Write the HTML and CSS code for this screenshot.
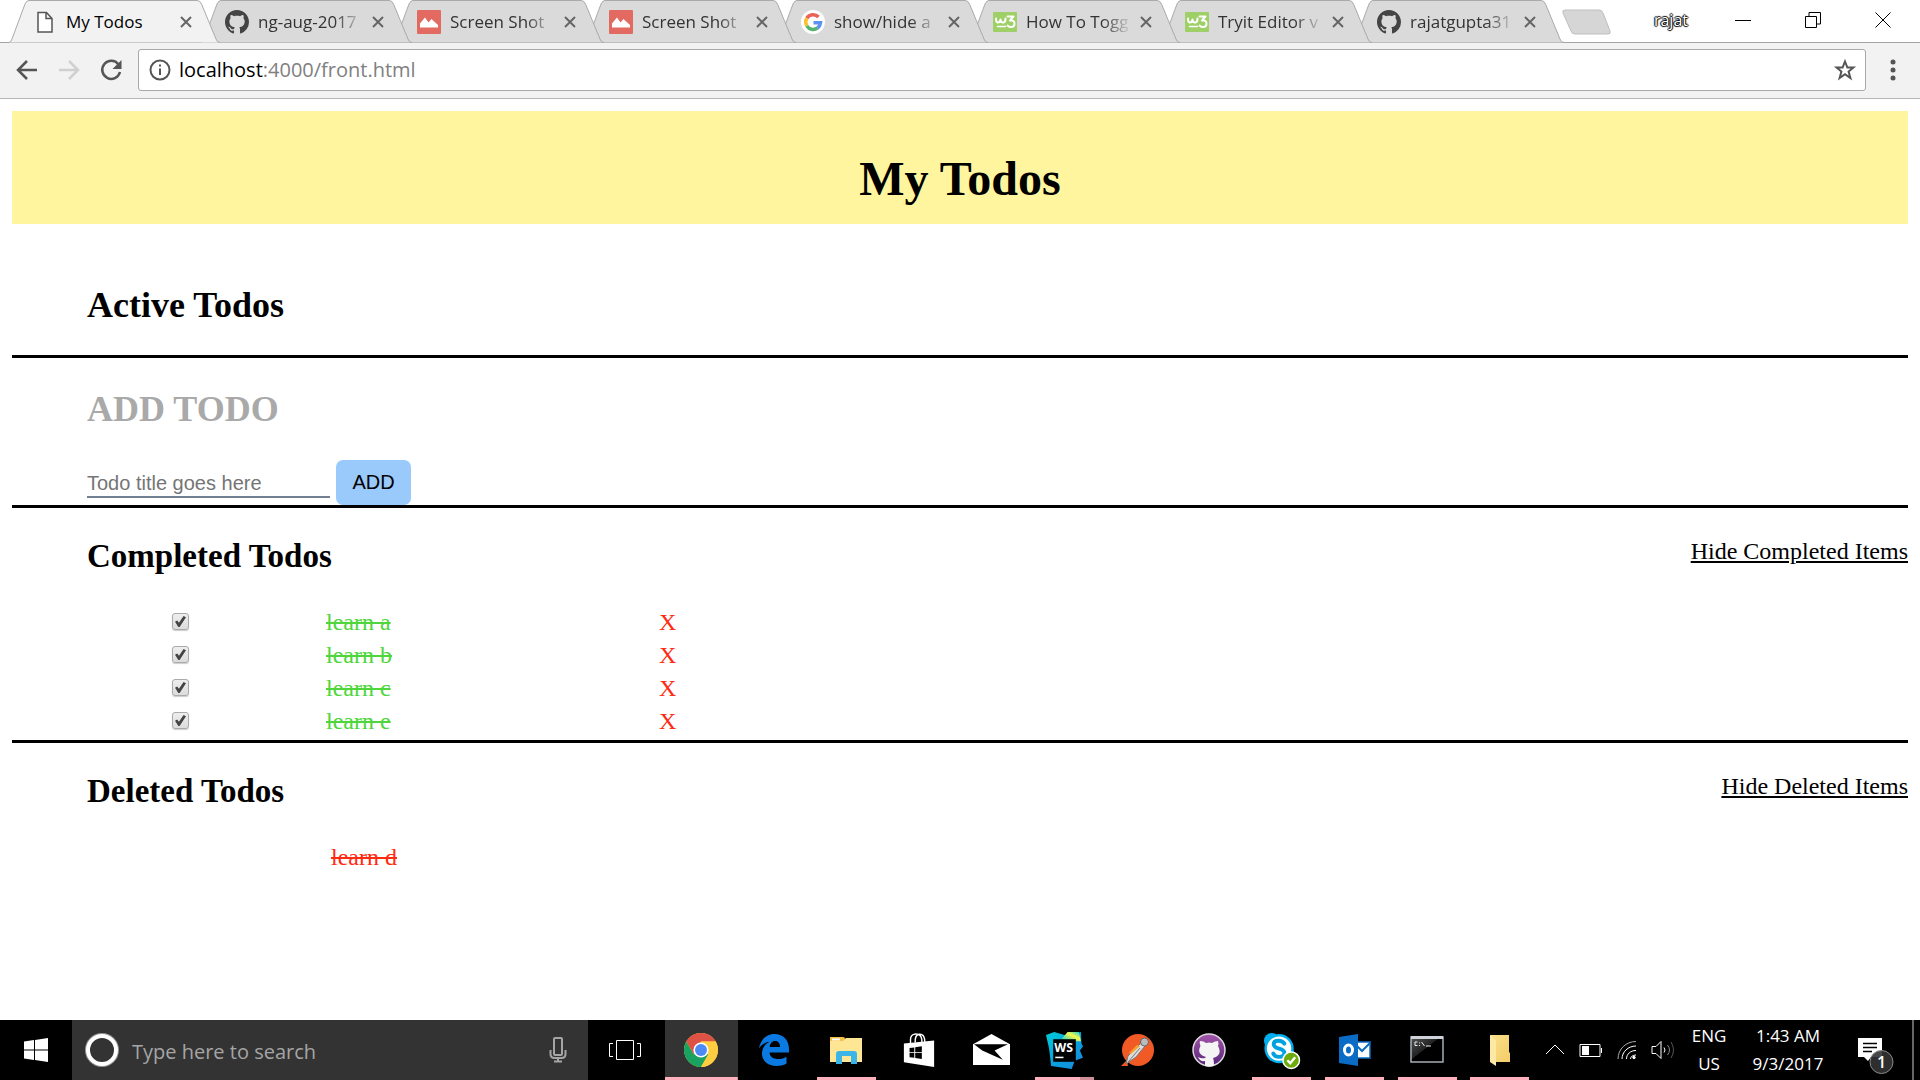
FILE: index.html
```html
<!DOCTYPE html>
<html lang="en">
<head>
<meta charset="utf-8">
<title>My Todos</title>
<link rel="stylesheet" href="styles.css">
</head>
<body>
<svg class="defs" aria-hidden="true">
  <defs>
    <linearGradient id="cubeFill" x1="0" y1="0" x2="1" y2="1"><stop offset="0" stop-color="#00cdd7"/><stop offset=".55" stop-color="#07a0e0"/><stop offset="1" stop-color="#2086d7"/></linearGradient>
    <linearGradient id="cubeTop" x1="0" y1="1" x2="1" y2="0"><stop offset="0" stop-color="#00cdd7"/><stop offset=".6" stop-color="#fcf84a"/><stop offset="1" stop-color="#00cdd7"/></linearGradient>
    <linearGradient id="catFill" x1="0" y1="0" x2="0" y2="1"><stop offset="0" stop-color="#a455ab"/><stop offset="1" stop-color="#57247a"/></linearGradient>
    <linearGradient id="consoleFill" x1="0" y1="0" x2="1" y2="1"><stop offset="0" stop-color="#555"/><stop offset=".45" stop-color="#222"/><stop offset=".46" stop-color="#000"/></linearGradient>
    <linearGradient id="folderFill" x1="0" y1="0" x2="1" y2="1"><stop offset="0" stop-color="#fbe08a"/><stop offset="1" stop-color="#f3cd68"/></linearGradient>
    <symbol id="tab-shape" viewBox="0 0 211 43"><path d="M0 42.500 Q2 42 3 39 L16 4 Q17.500 .5 20 .5 H188 Q191 .5 192.500 4 L207 39 Q208 42.500 211 42.500"/></symbol>
    <symbol id="octocat" viewBox="0 0 16 16"><path d="M8 0C3.580 0 0 3.580 0 8c0 3.540 2.290 6.530 5.470 7.590.4.070.55-.17.55-.38 0-.19-.01-.82-.01-1.490-2.010.37-2.530-.49-2.690-.94-.09-.23-.48-.94-.82-1.130-.28-.15-.68-.52-.01-.53.63-.01 1.080.58 1.230.82.72 1.210 1.870.87 2.330.66.07-.52.28-.87.51-1.070-1.780-.2-3.640-.89-3.640-3.950 0-.87.31-1.590.82-2.150-.08-.2-.36-1.020.08-2.120 0 0 .67-.21 2.200.82.64-.18 1.320-.27 2-.27s1.360.09 2 .27c1.530-1.040 2.200-.82 2.200-.82.44 1.100.16 1.920.08 2.120.51.56.82 1.270.82 2.150 0 3.070-1.870 3.750-3.650 3.950.29.25.54.73.54 1.480 0 1.070-.01 1.930-.01 2.200 0 .21.15.46.55.38A8.010 8.010 0 0 0 16 8c0-4.420-3.580-8-8-8z"/></symbol>
    <symbol id="picture" viewBox="0 0 24 24"><path fill="#e36a60" d="M1 0h22q1 0 1 1v22q0 1-1 1H1q-1 0-1-1V1q0-1 1-1z"/><path fill="#fff" d="M3 17v-3.500L8 7.500l3.500 5L14.500 9 21 15v2.500H3z"/></symbol>
    <symbol id="w3" viewBox="0 0 24 24"><rect y="2" width="24" height="20" rx="1" fill="#9fcf67"/><g fill="none" stroke="#fff" stroke-width="2" stroke-linecap="round" stroke-linejoin="round"><path d="M3 8.500q0 4 2 4t2.500-3q0 3 2.500 3T12.500 8.500"/><path d="M14.500 6.500h6l-3.500 4q4.500-.5 4.500 3T18 17q-2.500 0-3.500-1.500"/><path stroke-width="1.500" d="M4.500 16.500h8"/></g></symbol>
    <symbol id="cross" viewBox="0 0 12 12"><path d="M1 1l10 10M11 1L1 11"/></symbol>
  </defs>
</svg>

<header class="browser">
  <div class="tabstrip">
    <nav class="tabs" aria-label="Tabs">
      <div class="tab active"><svg class="shape"><use href="#tab-shape"/></svg><div class="tab-body">
        <svg class="favicon" viewBox="0 0 24 24"><path fill="#fff" stroke="#555" stroke-width="1.500" d="M5 2.500h8.500l5.500 6V22H5zM13 2.500v6h6"/></svg>
        <a class="tab-title" href="#my-todos">My Todos</a><button class="tab-close" aria-label="Close tab"><svg><use href="#cross"/></svg></button></div></div>
      <div class="tab"><svg class="shape"><use href="#tab-shape"/></svg><div class="tab-body">
        <svg class="favicon" fill="#444"><use href="#octocat"/></svg>
        <a class="tab-title" href="#">ng-aug-2017</a><button class="tab-close" aria-label="Close tab"><svg><use href="#cross"/></svg></button></div></div>
      <div class="tab"><svg class="shape"><use href="#tab-shape"/></svg><div class="tab-body">
        <svg class="favicon"><use href="#picture"/></svg>
        <a class="tab-title" href="#">Screen Shot</a><button class="tab-close" aria-label="Close tab"><svg><use href="#cross"/></svg></button></div></div>
      <div class="tab"><svg class="shape"><use href="#tab-shape"/></svg><div class="tab-body">
        <svg class="favicon"><use href="#picture"/></svg>
        <a class="tab-title" href="#">Screen Shot</a><button class="tab-close" aria-label="Close tab"><svg><use href="#cross"/></svg></button></div></div>
      <div class="tab"><svg class="shape"><use href="#tab-shape"/></svg><div class="tab-body">
        <svg class="favicon" viewBox="0 0 24 24"><circle cx="12" cy="12" r="12" fill="#fff"/><g fill="none" stroke-width="3.500"><path stroke="#ea6258" d="M5.800 8.200A7.500 7.500 0 0 1 17.500 7"/><path stroke="#fbc02d" d="M5.800 8.200a7.500 7.500 0 0 0 0 7.600"/><path stroke="#55b36d" d="M5.800 15.800a7.500 7.500 0 0 0 10.700 2.200"/><path stroke="#5c93f2" d="M16.500 18a7.500 7.500 0 0 0 3-5.200H12.500"/></g></svg>
        <a class="tab-title" href="#">show/hide a</a><button class="tab-close" aria-label="Close tab"><svg><use href="#cross"/></svg></button></div></div>
      <div class="tab"><svg class="shape"><use href="#tab-shape"/></svg><div class="tab-body">
        <svg class="favicon"><use href="#w3"/></svg>
        <a class="tab-title" href="#">How To Togg</a><button class="tab-close" aria-label="Close tab"><svg><use href="#cross"/></svg></button></div></div>
      <div class="tab"><svg class="shape"><use href="#tab-shape"/></svg><div class="tab-body">
        <svg class="favicon"><use href="#w3"/></svg>
        <a class="tab-title" href="#">Tryit Editor v</a><button class="tab-close" aria-label="Close tab"><svg><use href="#cross"/></svg></button></div></div>
      <div class="tab"><svg class="shape"><use href="#tab-shape"/></svg><div class="tab-body">
        <svg class="favicon" fill="#444"><use href="#octocat"/></svg>
        <a class="tab-title" href="#">rajatgupta31</a><button class="tab-close" aria-label="Close tab"><svg><use href="#cross"/></svg></button></div></div>
    </nav>
    <button class="new-tab" aria-label="New tab"><svg viewBox="0 0 52 26"><path fill="#d6d6d6" stroke="#bebebe" d="M4 1h34q3 0 4 3l7 18q1 3-2 3H14q-3 0-4-3L2 4q-1-3 2-3z"/></svg></button>
    <div class="window-controls">
      <span class="profile">rajat</span>
      <button aria-label="Minimize"><svg viewBox="0 0 16 16"><path d="M0 8.500h16"/></svg></button>
      <button aria-label="Restore"><svg viewBox="0 0 16 16"><path d="M.5 4.500h11v11H.5zM4 4V.5h11.500V12H12"/></svg></button>
      <button aria-label="Close"><svg viewBox="0 0 16 16"><path d="M.5.5l15 15M15.500.5l-15 15"/></svg></button>
    </div>
  </div>
  <div class="toolbar">
    <button class="tool" aria-label="Back"><svg viewBox="0 0 24 24" stroke="#555"><path d="M22 12H3M12 3l-9 9 9 9"/></svg></button>
    <button class="tool" aria-label="Forward"><svg viewBox="0 0 24 24" stroke="#d0d0d0"><path d="M2 12h19M12 3l9 9-9 9"/></svg></button>
    <button class="tool" aria-label="Reload"><svg viewBox="0 0 24 24" stroke="#555"><path d="M19.500 6.500A9 9 0 1 0 21 14"/><path fill="#555" stroke="none" d="M22.500 2v9h-9z"/></svg></button>
    <div class="omnibox">
      <svg class="info" viewBox="0 0 22 22"><circle cx="11" cy="11" r="9.500"/><path d="M11 9.500V16M11 5.500v2"/></svg>
      <a class="url" href="#my-todos"><span class="host">localhost</span>:4000/front.html</a>
      <button class="star" aria-label="Bookmark"><svg viewBox="0 0 22 22"><path d="M11 2.500l2.400 6h6l-4.800 4 1.800 6.500-5.400-3.800L5.600 19l1.800-6.500-4.800-4h6z"/></svg></button>
    </div>
    <button class="menu" aria-label="Menu"><svg viewBox="0 0 6 24"><circle cx="3" cy="4" r="2.500"/><circle cx="3" cy="12" r="2.500"/><circle cx="3" cy="20" r="2.500"/></svg></button>
  </div>
</header>

<main class="page" id="my-todos">
  <div class="banner"><h1>My Todos</h1></div>
  <section class="active-todos"><h2>Active Todos</h2></section>
  <section class="add-todo">
    <h2>ADD TODO</h2>
    <form class="add-form">
      <input type="text" aria-label="Todo title" placeholder="Todo title goes here">
      <button type="button">ADD</button>
    </form>
  </section>
  <section class="completed">
    <div class="section-head"><h3>Completed Todos</h3><a href="#completed">Hide Completed Items</a></div>
    <ul class="todos" id="completed">
      <li><input type="checkbox" id="t1" checked><label for="t1">learn a</label><button aria-label="Delete learn a">X</button></li>
      <li><input type="checkbox" id="t2" checked><label for="t2">learn b</label><button aria-label="Delete learn b">X</button></li>
      <li><input type="checkbox" id="t3" checked><label for="t3">learn c</label><button aria-label="Delete learn c">X</button></li>
      <li><input type="checkbox" id="t4" checked><label for="t4">learn e</label><button aria-label="Delete learn e">X</button></li>
    </ul>
  </section>
  <section class="deleted">
    <div class="section-head"><h3>Deleted Todos</h3><a href="#deleted">Hide Deleted Items</a></div>
    <ul class="todos removed" id="deleted"><li><del>learn d</del></li></ul>
  </section>
</main>

<footer class="taskbar">
  <button class="start" aria-label="Start"><svg viewBox="0 0 24 24"><path fill="#fff" d="M0 3.500L10 2v9.500H0zM11 1.900L24 0v11.500H11zM0 12.500h10V22L0 20.500zM11 12.500h13V24l-13-1.900z"/></svg></button>
  <div class="search">
    <svg class="cortana" viewBox="0 0 34 34"><circle cx="17" cy="17" r="15.500" fill="none" stroke="#999" stroke-width="3"/><circle cx="17" cy="17" r="14" fill="none" stroke="#fff" stroke-width="4"/></svg>
    <input type="text" aria-label="Search" placeholder="Type here to search">
    <svg class="mic" viewBox="0 0 18 26"><path d="M6 1h6q1 0 1 1v15q0 1-1 1H6q-1 0-1-1V2q0-1 1-1zM1.500 13v4q0 4 4 4h7q4 0 4-4v-4M9 21v3M5 24.500h8"/></svg>
  </div>
  <button class="task-view" aria-label="Task view"><svg viewBox="0 0 32 22"><path d="M7.500 1.500h17v19h-17zM4 4.500H.5v13H4M28 4.500h3.500v13H28"/></svg></button>
  <nav class="apps" aria-label="Apps">
    <button class="app open current" aria-label="Chrome"><svg viewBox="0 0 34 34"><circle cx="17" cy="17" r="17" fill="#ffcd40"/><path fill="#de5145" d="M2.300 8.500A17 17 0 0 1 31.700 8.500H17L9.600 21.200z"/><path fill="#1aa260" d="M2.300 8.500A17 17 0 0 0 17 34l7.400-12.700-14.800 0z"/><path fill="#ffcd40" d="M17 34A17 17 0 0 0 31.700 8.500H17l7.400 12.800z"/><circle cx="17" cy="17" r="7.600" fill="#fff"/><circle cx="17" cy="17" r="6" fill="#4c8bf5"/></svg></button>
    <button class="app" aria-label="Edge"><svg viewBox="0 0 34 34"><path fill="#0a7ae2" d="M2 15.500C3.500 6.500 9.500 1 17.500 1 26.500 1 32 7.500 32 16v3.500H12.500c.3 4.500 4 6.500 8.500 6.500 3.500 0 6-.8 8.500-2.300V30.500C26.500 32.300 23 33 19.500 33 11 33 5 28 5 20.500c0-5 3-9.500 7.500-11.700C8.500 9 4.500 11.500 2 15.500zM12.700 14H23c0-3.500-1.500-6-5-6-3 0-5 2.500-5.300 6z"/></svg></button>
    <button class="app open" aria-label="File Explorer"><svg viewBox="0 0 34 34"><path fill="#f5c243" d="M1 4h13q2 0 2 2v3H1z"/><path fill="#ffe694" d="M1 8h13l3-3h16v24H1z"/><path fill="#fff" d="M3 5.500h8v2H3z"/><path fill="#3bb4e7" d="M7 31V21q0-3 3-3h15q3 0 3 3v10h-6v-8H13v8z"/></svg></button>
    <button class="app" aria-label="Store"><svg viewBox="0 0 34 36"><path fill="none" stroke="#fff" stroke-width="1.500" d="M8 11V7c0-8 11-8 12 0v4M13 10V7c1-8 9-7 10 0v3"/><path fill="#fff" d="M1 11L33 8v28L1 31z"/><path fill="#000" d="M7 16l5-.7v5H7zM13 15.100l7-1v6.200h-7zM7 21.300h5v5L7 25.600zM13 21.300h7v6.300l-7-1z"/></svg></button>
    <button class="app" aria-label="Mail"><svg class="wide" viewBox="0 0 36 34"><path fill="#fff" d="M0 11L18 1l18 10v20H0z"/><path fill="#000" d="M1 11h33l-13 6 8 9L9 17z"/></svg></button>
    <button class="app open grouped" aria-label="WebStorm"><svg class="wide" viewBox="0 0 36 36"><path fill="url(#cubeFill)" d="M0 3l8-3 10 3 16-3 .5 11 1.500 3-3 4 3 7-8 3-3 8-20-3-2-17z"/><path fill="url(#cubeTop)" d="M15 7l6-7 11 0 2 9-7 0z"/><path d="M7 7h22v22H7z"/><text x="8" y="19" fill="#fff" font-family="Open Sans, sans-serif" font-weight="700" font-size="12">WS</text><path fill="#fff" d="M9 24h8v1.500H9z"/></svg></button>
    <button class="app" aria-label="Postman"><svg viewBox="0 0 34 34"><circle cx="18" cy="17" r="16" fill="#f15a24"/><path fill="#f15a24" d="M7 27l-6 6h7z"/><path fill="#ddd" stroke="#777" d="M6 31l2-8 13-13 4 3-9 11z"/><path fill="#f7a12d" d="M9 20l8-8 3 1-9 8z"/><circle cx="24.500" cy="9" r="4" fill="#bbb" stroke="#666"/><path stroke="#777" d="M8 29l12-14"/></svg></button>
    <button class="app" aria-label="GitHub"><svg viewBox="0 0 34 34"><circle cx="17" cy="17" r="16" fill="url(#catFill)" stroke="#ddd" stroke-width="1.500"/><path fill="#f4f4f4" d="M8 8q4 0 6 2 3-.8 6 0 3-2 6-2 1 3 0 5 5 9-5 12 1 2 1 8-5 1.500-9 0v-5q-5 1-7-4 4 2 7 1l1-1Q4 21 8.500 13 7 10 8 8z"/></svg></button>
    <button class="app open" aria-label="Skype"><svg class="wide" viewBox="0 0 38 38"><circle cx="9" cy="9" r="8" fill="#00aff0"/><circle cx="24" cy="24" r="9" fill="#00aff0"/><circle cx="16.500" cy="17" r="15" fill="#00aff0"/><circle cx="16.500" cy="17" r="12.500" fill="#fff"/><path fill="none" stroke="#00a2e0" stroke-width="4" stroke-linecap="round" d="M22 12q-2-3-6-3-5 0-5 3.500 0 3 5.500 4.500t5.500 4.500q0 4-5.500 4-4.500 0-6-3.500"/><circle cx="29" cy="29" r="8.500" fill="#6bab0b" stroke="#fff" stroke-width="1.500"/><path fill="none" stroke="#fff" stroke-width="2.500" d="M25 29l3 3 5-6"/></svg></button>
    <button class="app open" aria-label="Outlook"><svg viewBox="0 0 34 34"><path fill="#fff" stroke="#0a6cc4" stroke-width="1.500" d="M17 9h15v16H17z"/><path fill="none" stroke="#0a6cc4" stroke-width="2" d="M18 12l6 6 8-8"/><path fill="#0a6cc4" d="M1 4l19-3v32L1 30z"/><ellipse cx="10.500" cy="17" rx="4" ry="5" fill="none" stroke="#fff" stroke-width="3"/></svg></button>
    <button class="app open" aria-label="Command Prompt"><svg viewBox="0 0 34 34"><path fill="url(#consoleFill)" stroke="#a5adb5" stroke-width="1.500" d="M1 4h32v25H1z"/><path fill="#cdd3d9" d="M1 3h32v3H1z"/><path fill="none" stroke="#eee" d="M7.500 9H5v3.500h2.500M9.500 9.500v1M9.500 12v1M11.500 9l3 4M16 13h5"/></svg></button>
    <button class="app open" aria-label="Folder"><svg viewBox="0 0 34 34"><path fill="url(#folderFill)" d="M7 2h19v17l1 1v9H12z"/><path fill="#fde9a6" d="M7 2l6 5v26l-6-4z"/></svg></button>
  </nav>
  <div class="tray">
    <svg class="t-chevron" viewBox="0 0 20 20"><path d="M1 14l9-9 9 9"/></svg>
    <svg class="t-battery" viewBox="0 0 24 20"><path d="M1 4.500h20v12H1zM22.500 8v5"/><path fill="#fff" stroke="none" d="M3 6h7v9H3z"/></svg>
    <svg class="t-wifi" viewBox="0 0 20 20"><path stroke="#aaa" d="M1 19C1 9 9 1.500 19 1.500"/><path d="M5 19C5 12 11 6 19 6M9.500 19c0-5 4-8.500 9.500-8.500M13.500 19c0-2.500 2.500-4 5.500-4"/><circle cx="17" cy="17.500" r="1.200" fill="#fff"/></svg>
    <svg class="t-volume" viewBox="0 0 24 20"><path d="M1 6.500h4l5-5v17l-5-5H1z"/><path d="M13 7.500q2 2.500 0 5"/><path stroke="#888" d="M16.500 5q4 5 0 10"/><path stroke="#555" d="M20 2q5 8 0 16"/></svg>
    <div class="lang">ENG<br>US</div>
    <div class="clock">1:43 AM<br>9/3/2017</div>
    <button class="action" aria-label="Notifications"><svg viewBox="0 0 36 38"><path fill="#fff" d="M1 1h24v19H14l-3 4-4-4H1z"/><path stroke="#000" stroke-width="1.500" d="M6 6.500h14M6 10.500h14M6 14.500h9"/><circle cx="24.500" cy="25" r="11.500" fill="#333" fill-opacity=".9" stroke="#888"/><text x="24.500" y="31" text-anchor="middle" fill="#fff" font-family="Open Sans, sans-serif" font-size="16" font-weight="600">1</text></svg></button>
  </div>
</footer>
</body>
</html>
```
FILE: styles.css
```css
* { box-sizing: border-box; }
html, body { height: 100%; }
body {
  margin: 0;
  display: flex;
  flex-direction: column;
  background: #fff;
  color: #000;
  font-family: "Liberation Serif", serif;
  font-size: 24px;
}
button { border: 0; padding: 0; background: none; font: inherit; color: inherit; }
svg { display: block; flex: none; overflow: visible; }
.defs { position: absolute; width: 0; height: 0; }

/* Browser frame */
.browser { font-family: "Open Sans", sans-serif; flex: none; }
.tabstrip {
  display: flex;
  height: 43px;
  padding-left: 9px;
  background: linear-gradient(#a5a5a5, #a5a5a5) bottom / 100% 1px no-repeat #fff;
}
.tabs { display: flex; isolation: isolate; }
.tab { display: grid; flex: none; width: 211px; height: 43px; margin-right: -19px; }
.tab:nth-child(1) { z-index: 8; }
.tab:nth-child(2) { z-index: 7; }
.tab:nth-child(3) { z-index: 6; }
.tab:nth-child(4) { z-index: 5; }
.tab:nth-child(5) { z-index: 4; }
.tab:nth-child(6) { z-index: 3; }
.tab:nth-child(7) { z-index: 2; }
.tab:nth-child(8) { z-index: 1; }
.tab > * { grid-area: 1 / 1; }
.shape { width: 211px; height: 43px; fill: #dadada; stroke: #aaa; }
.active .shape { fill: #f2f2f2; }
.tab:not(.active) { border-bottom: 1px solid #a5a5a5; }
.tab-body { display: flex; align-items: center; height: 43px; padding-left: 24px; }
.favicon { width: 24px; height: 24px; }
.tab-title {
  width: 106px;
  margin-left: 9px;
  white-space: nowrap;
  font-size: 17px;
  line-height: 24px;
  color: #333;
  text-decoration: none;
  mask-image: linear-gradient(90deg, #000 76px, transparent 106px);
}
.active .tab-title { color: #000; mask-image: none; }
.tab-close { width: 12px; height: 12px; margin-left: 8px; }
.tab-close svg { width: 12px; height: 12px; stroke: #666; stroke-width: 2; }
.new-tab { align-self: center; width: 52px; height: 26px; margin-left: 16px; }
.new-tab svg { width: 52px; height: 26px; }
.window-controls { display: flex; align-items: center; height: 40px; margin-left: auto; margin-right: 29px; gap: 54px; }
.window-controls svg { width: 16px; height: 16px; fill: none; stroke: #000; }
.profile {
  margin-right: -7px;
  font-size: 16px;
  line-height: 20px;
  color: #fff;
  text-shadow: 1px 0 1px #000, -1px 0 1px #000, 0 1px 1px #000, 0 -1px 1px #000;
}
.toolbar {
  display: flex;
  align-items: center;
  height: 56px;
  padding: 0 24px 2px 15px;
  background: #f2f2f2;
  border-bottom: 1px solid #b6b4b6;
}
.tool { margin-right: 18px; }
.tool svg { width: 24px; height: 24px; fill: none; stroke-width: 2.5; }
.omnibox {
  display: flex;
  align-items: center;
  flex: 1;
  height: 42px;
  margin-right: 24px;
  margin-left: -3px;
  padding: 0 9px 0 10px;
  background: #fff;
  border: 1px solid #a9a9a9;
  border-radius: 3px;
}
.info { width: 22px; height: 22px; fill: none; stroke: #555; stroke-width: 2; }
.url { margin-left: 8px; font-size: 20px; line-height: 28px; color: #808080; text-decoration: none; }
.host { color: #000; }
.star { margin-left: auto; }
.star svg { width: 22px; height: 22px; fill: none; stroke: #555; stroke-width: 2; }
.menu svg { width: 6px; height: 24px; fill: #555; }

/* Todo page */
.page { flex: 1; padding: 12px; }
.banner { padding-top: 31px; height: 113px; background: #fff59f; text-align: center; }
h1, h2, h3 { margin: 0; }
h1 { font-size: 48px; line-height: 74px; }
h2 { font-size: 36px; line-height: 42px; }
h3 { font-size: 33px; line-height: 38px; }
.active-todos { padding: 60px 75px 29px; }
.add-todo { border-top: 3px solid #000; padding: 30px 75px 0; }
.add-todo h2 { color: #a9a9a9; }
.add-form { display: flex; align-items: flex-start; gap: 6px; margin-top: 30px; }
.add-form input {
  width: 243px;
  height: 29px;
  margin-top: 9px;
  padding: 2px 0 0;
  border: 0;
  border-bottom: 2px solid #708090;
  font: 20px "Liberation Sans", sans-serif;
}
.add-form input::placeholder { color: #757575; }
.add-form button {
  width: 75px;
  height: 45px;
  border-radius: 7px;
  background: #9acafc;
  font: 20px "Liberation Sans", sans-serif;
}
.completed, .deleted { border-top: 3px solid #000; padding: 29px 0 0 75px; }
.section-head { display: flex; justify-content: space-between; align-items: flex-start; }
.section-head a { color: #000; line-height: 28px; }
.todos { list-style: none; margin: 30px 0 0; padding: 0 0 3px 85px; }
.todos li { display: grid; grid-template-columns: 154px 333px auto; align-items: center; justify-content: start; height: 33px; }
.todos label, .todos button { line-height: 28px; }
.todos label { color: #4fd63c; text-decoration: line-through; }
.todos button { color: #ff2a12; }
.todos input {
  appearance: none;
  display: grid;
  width: 17px;
  height: 17px;
  margin: 0;
  border: 1px solid #aaa;
  border-radius: 3px;
  background: linear-gradient(#eee, #dcdcdc);
  box-shadow: 0 1px 1px #ccc;
}
.todos input:checked::before {
  content: "";
  margin: 2px;
  background: #444;
  clip-path: polygon(0 52%, 20% 42%, 36% 62%, 78% 0, 100% 12%, 42% 100%, 30% 100%);
}
.removed li { grid-template-columns: auto; padding-left: 159px; }
.removed del { color: #ff2a12; line-height: 28px; }

/* Taskbar */
.taskbar {
  display: flex;
  flex: none;
  height: 60px;
  background: #000;
  color: #fff;
  font-family: "Open Sans", sans-serif;
}
.start { display: grid; place-items: center; width: 72px; }
.start svg { width: 24px; height: 24px; }
.search { display: flex; align-items: center; width: 516px; padding: 0 21px 0 13px; background: #333; }
.cortana { width: 34px; height: 34px; }
.search input {
  flex: 1;
  margin: 0;
  padding: 2px 0 0 13px;
  border: 0;
  background: none;
  font: 20px "Open Sans", sans-serif;
}
.search input::placeholder { color: #a5a5a5; }
.mic { width: 18px; height: 26px; fill: none; stroke: #a5a5a5; stroke-width: 2; }
.task-view { display: grid; place-items: center; width: 77px; padding-right: 4px; }
.task-view svg { width: 32px; height: 22px; fill: none; stroke: #fff; stroke-width: 1; }
.apps { display: grid; grid-template-columns: repeat(12, 1fr); width: 871px; }
.app { display: grid; place-items: center; }
.app svg { width: 34px; height: 34px; }
.app .wide { width: 37px; height: 37px; }
.open { background: linear-gradient(#ffb0bc, #ffb0bc) bottom / 59px 3px no-repeat; }
.current { background: linear-gradient(#ffb0bc, #ffb0bc) bottom / 100% 3px no-repeat #333; }
.grouped { background: linear-gradient(90deg, #ffb0bc 76%, #cf8e98 76%) bottom / 59px 3px no-repeat; }
.tray {
  display: flex;
  align-items: center;
  flex: 1;
  justify-content: flex-end;
  border-right: 2px solid #666;
  margin-right: 6px;
  padding-right: 19px;
  font-size: 17px;
  line-height: 28px;
  text-align: center;
}
.tray > svg { height: 20px; fill: none; stroke: #fff; margin-right: 14px; }
.t-chevron, .t-wifi { width: 20px; }
.t-battery, .t-volume { width: 24px; }
.lang { width: 40px; }
.clock { width: 80px; margin: 0 29px 0 19px; white-space: nowrap; }
.action { padding-top: 12px; }
.action svg { width: 36px; height: 38px; }
```
